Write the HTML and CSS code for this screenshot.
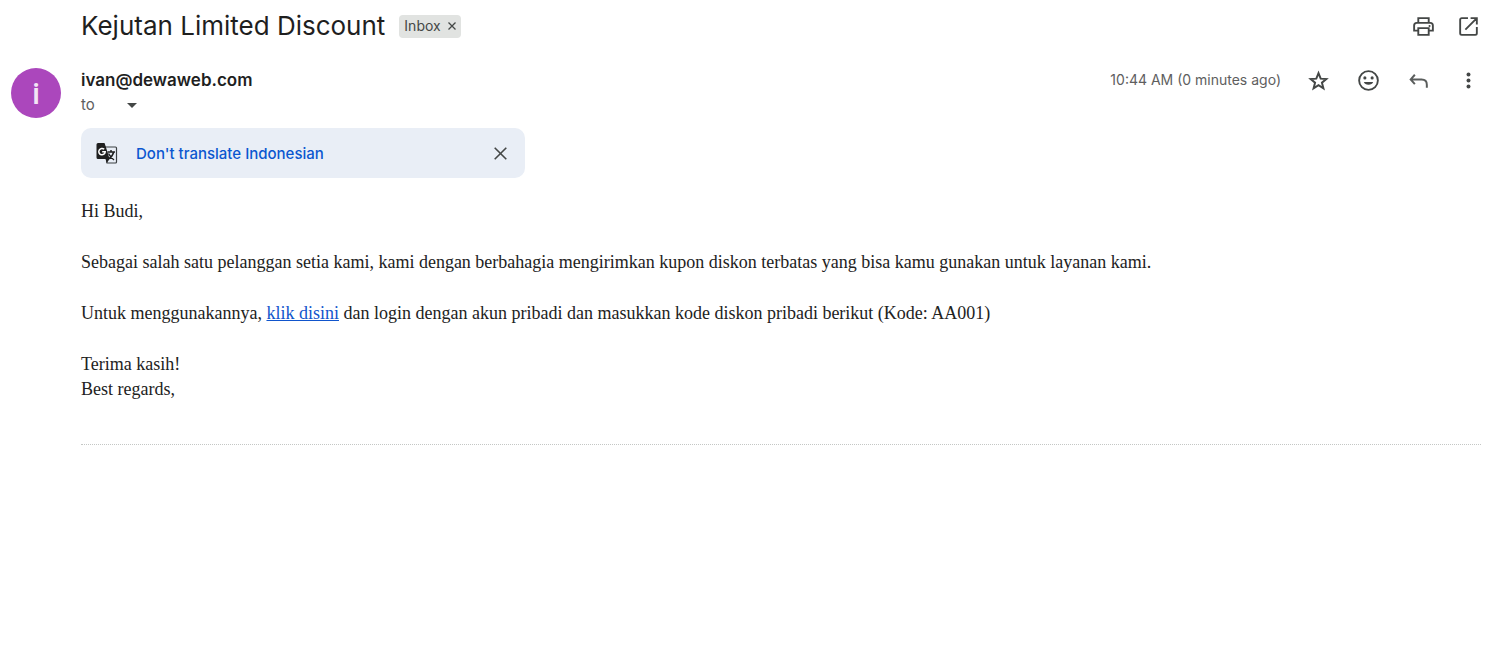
FILE: index.html
```html
<!DOCTYPE html>
<html lang="id">
<head>
  <meta charset="UTF-8">
  <meta name="viewport" content="width=device-width, initial-scale=1.0">
  <title>Kejutan Limited Discount</title>
  <link rel="stylesheet" href="styles.css">
</head>
<body>
  <header class="subject-bar">
    <h1 class="subject">Kejutan Limited Discount</h1>
    <div class="label">
      <span>Inbox</span>
      <button class="label-remove" aria-label="Remove label">
        <svg viewBox="0 0 8 8" width="8" height="8"><path d="M.5.5l7 7M7.5.5l-7 7" fill="none" stroke="#444746" stroke-width="1.3"/></svg>
      </button>
    </div>
    <div class="subject-actions">
      <button class="icon-btn" aria-label="Print">
        <svg viewBox="0 0 24 24"><path d="M7 8V4h10v4M7 16H3v-5c0-1.400 1-2.500 2.500-2.500h13c1.500 0 2.500 1.100 2.500 2.500v5h-4M7 13.500h10V20H7z" fill="none" stroke="#444746" stroke-width="1.800"/><circle cx="17.800" cy="11.500" r="1"/></svg>
      </button>
      <button class="icon-btn" aria-label="Open in new window">
        <svg viewBox="0 0 24 24"><path d="M11.500 4H5.500C4.600 4 4 4.600 4 5.500v13c0 .900.600 1.500 1.500 1.500h13c.900 0 1.500-.600 1.500-1.500v-6M14 4h6v6M20 4L9 15" fill="none" stroke="#444746" stroke-width="1.800"/></svg>
      </button>
    </div>
  </header>

  <main class="message">
    <div class="avatar">i</div>
    <div class="content">
      <div class="message-head">
        <div class="sender">
          <h2 class="sender-name">ivan@dewaweb.com</h2>
          <div class="recipient">
            <span>to</span>
            <button class="details" aria-label="Show details">
              <svg viewBox="0 0 10 5" width="10" height="5"><path d="M0 0h10L5 5z" fill="#444746"/></svg>
            </button>
          </div>
        </div>
        <span class="date">10:44 AM (0 minutes ago)</span>
        <div class="message-actions">
          <button class="icon-btn" aria-label="Star">
            <svg viewBox="0 0 24 24"><path d="M12 5l2.100 5.200 5.400.400-4.200 3.500 1.400 5.400-4.700-3-4.700 3 1.400-5.400-4.200-3.500 5.400-.400z" fill="none" stroke="#444746" stroke-width="1.900"/></svg>
          </button>
          <button class="icon-btn" aria-label="Add reaction">
            <svg viewBox="0 0 24 24"><circle cx="12" cy="12" r="9" fill="none" stroke="#444746" stroke-width="1.800"/><circle cx="8.500" cy="9.500" r="1.500"/><circle cx="15.500" cy="9.500" r="1.500"/><path d="M7.500 13.500h9a4.700 3.700 0 0 1-9 0z"/></svg>
          </button>
          <button class="icon-btn" aria-label="Reply">
            <svg viewBox="0 0 24 24"><path d="M8.500 6.500L4.500 11l4 4.500M4.500 11h10.500c3 0 5 2 5 5v3" fill="none" stroke="#5a5d5c" stroke-width="1.900"/></svg>
          </button>
          <button class="icon-btn" aria-label="More">
            <svg viewBox="0 0 24 24"><circle cx="12" cy="6.200" r="1.900"/><circle cx="12" cy="12" r="1.900"/><circle cx="12" cy="17.800" r="1.900"/></svg>
          </button>
        </div>
      </div>

      <div class="translate">
        <svg class="translate-icon" viewBox="0 0 22 22" aria-hidden="true">
          <path d="M9 5h10.500a1 1 0 0 1 1 1v14a1 1 0 0 1-1 1h-8.500z" fill="#e9eef6" stroke="#3c4043" stroke-width="1.200"/>
          <path d="M2 1h6.500l1.300 3.700L13.600 17 10.700 21 9.500 17H2a1.500 1.500 0 0 1-1.500-1.500v-13A1.500 1.500 0 0 1 2 1z" fill="#1f1f1f"/>
          <path d="M8.200 7.300A3.200 3.200 0 1 0 9.200 9.700H6.200" fill="none" stroke="#fff" stroke-width="1.500"/>
          <path d="M11.500 10h7.500M15 8v2M17.700 10c-.700 3-2.500 5.200-4.700 6.700M12.500 11.500c1.300 2.500 3 4.500 5.500 6.500" fill="none" stroke="#1f1f1f" stroke-width="1.500"/>
        </svg>
        <a class="translate-link" href="#">Don't translate Indonesian</a>
        <button class="translate-close" aria-label="Close">
          <svg viewBox="0 0 13 13" width="13" height="13"><path d="M.7.7l11.600 11.600M12.300.7L.7 12.300" fill="none" stroke="#444746" stroke-width="1.600"/></svg>
        </button>
      </div>

      <div class="mail-body">
        <p>Hi Budi,</p>
        <p>Sebagai salah satu pelanggan setia kami, kami dengan berbahagia mengirimkan kupon diskon terbatas yang bisa kamu gunakan untuk layanan kami.</p>
        <p>Untuk menggunakannya, <a href="#">klik disini</a> dan login dengan akun pribadi dan masukkan kode diskon pribadi berikut (Kode: AA001)</p>
        <p>Terima kasih!<br>Best regards,</p>
      </div>
    </div>
  </main>
</body>
</html>
```
FILE: styles.css
```css
body {
  margin: 0;
  padding: 0 17px 0 11px;
  background: #fff;
  color: #1f1f1f;
  font-family: Inter, sans-serif;
}

button {
  padding: 0;
  border: none;
  background: none;
  cursor: pointer;
}

svg {
  display: block;
}

.subject-bar {
  display: flex;
  align-items: center;
  height: 52px;
  padding-left: 70px;
}

.subject {
  margin: 0;
  font-size: 26px;
  font-weight: 400;
  line-height: 36px;
}

.label {
  display: flex;
  align-items: center;
  gap: 7px;
  margin-left: 14px;
  padding: 0 5px 1px;
  border-radius: 4px;
  background: #e1e3e1;
  color: #444746;
  font-size: 14px;
  line-height: 22px;
}

.subject-actions {
  display: flex;
  gap: 20px;
  margin-left: auto;
}

.icon-btn svg {
  width: 25px;
  height: 25px;
  fill: #444746;
}

.message {
  display: flex;
  gap: 20px;
  padding-top: 16px;
}

.avatar {
  flex: none;
  width: 50px;
  height: 50px;
  border-radius: 50%;
  background: #ab47bc;
  color: #f3e5f5;
  font-family: Roboto, sans-serif;
  font-size: 30px;
  font-weight: 500;
  line-height: 52px;
  text-align: center;
}

.content {
  flex: 1;
  border-bottom: 1px dotted #c4c7c5;
}

.message-head {
  display: flex;
  align-items: flex-start;
  height: 60px;
}

.sender-name {
  margin: 0;
  font-size: 17px;
  font-weight: 600;
  line-height: 24px;
}

.recipient {
  display: flex;
  align-items: center;
  gap: 32px;
  color: #5e5e5e;
  font-size: 15px;
  line-height: 26px;
}

.date {
  margin-left: auto;
  color: #5e5e5e;
  font-size: 14px;
  line-height: 24px;
}

.message-actions {
  display: flex;
  gap: 25px;
  margin-left: 25px;
}

.translate {
  display: flex;
  align-items: center;
  box-sizing: border-box;
  max-width: 444px;
  height: 50px;
  padding: 0 18px 0 15px;
  border-radius: 10px;
  background: #e9eef6;
}

.translate-icon {
  width: 22px;
  height: 22px;
}

.translate-link {
  margin-left: 18px;
  color: #0b57d0;
  font-size: 15px;
  font-weight: 500;
  text-decoration: none;
}

.translate-close {
  margin-left: auto;
}

.mail-body {
  padding: 21px 0 42px;
  color: #222;
  font-family: Georgia, "Liberation Serif", serif;
  font-size: 18px;
  line-height: 25px;
}

.mail-body p {
  margin: 0 0 26px;
}

.mail-body p:last-child {
  margin: 0;
}

.mail-body a {
  color: #1155cc;
}
```
